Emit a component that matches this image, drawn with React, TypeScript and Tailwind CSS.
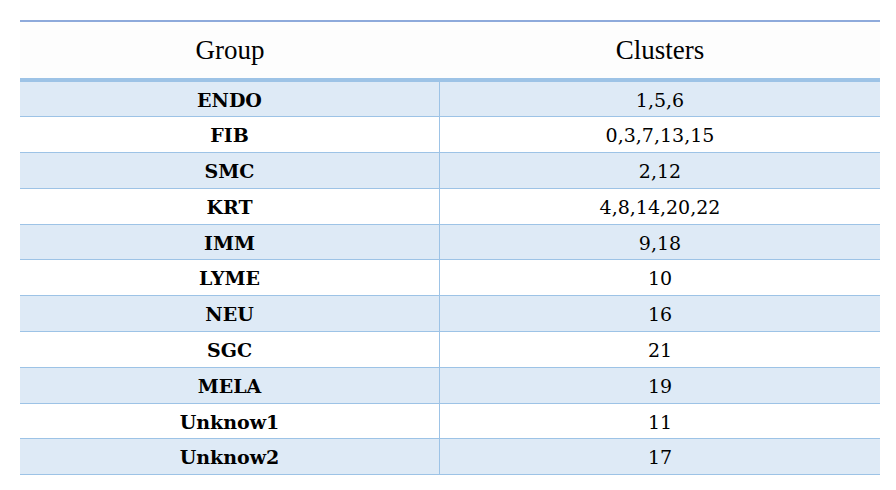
import React from "react";

const rows: [string, string, boolean][] = [
  ["ENDO", "1,5,6", false],
  ["FIB", "0,3,7,13,15", true],
  ["SMC", "2,12", true],
  ["KRT", "4,8,14,20,22", true],
  ["IMM", "9,18", false],
  ["LYME", "10", true],
  ["NEU", "16", true],
  ["SGC", "21", true],
  ["MELA", "19", true],
  ["Unknow1", "11", false],
  ["Unknow2", "17", true],
];

export default function App() {
  return (
    <div className="w-[896px] h-[490px] bg-white pt-[20px] pl-[20px] pr-[16px]">
      <div className="h-[2px] bg-[#8eaadb]" />
      <div
        className="grid grid-cols-[420px_440px] h-[56px] bg-[#fdfdfd] items-center text-[27px] text-black"
        style={{ fontFamily: '"Liberation Serif", serif' }}
      >
        <div className="text-center">Group</div>
        <div className="text-center">Clusters</div>
      </div>
      <div className="h-[4px] bg-[#9dc3e6]" />
      {rows.map(([g, c, tall], i) => (
        <div
          key={g}
          className={`grid grid-cols-[420px_440px] ${tall ? "h-[36px]" : "h-[35px]"} border-b border-solid border-[#9dc3e6] text-[19px] text-black ${i % 2 === 0 ? "bg-[#deeaf6]" : "bg-white"}`}
          style={{ fontFamily: '"DejaVu Serif", serif' }}
        >
          <div className="flex items-center justify-center pt-[2px] font-bold border-r border-solid border-[#9dc3e6]">{g}</div>
          <div className="flex items-center justify-center pt-[2px]">{c}</div>
        </div>
      ))}
    </div>
  );
}
